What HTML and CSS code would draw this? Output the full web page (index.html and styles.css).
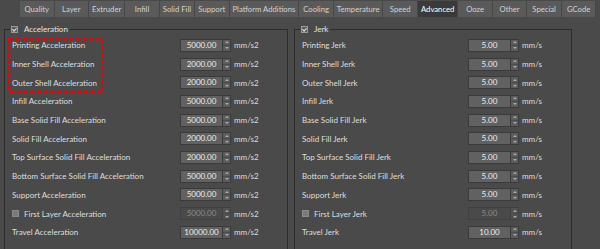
FILE: index.html
```html
<!DOCTYPE html>
<html lang="en">
<head>
  <meta charset="UTF-8">
  <meta name="viewport" content="width=device-width, initial-scale=1.0">
  <title>Advanced Settings</title>
  <link rel="stylesheet" href="styles.css">
</head>
<body>
  <div class="tabbar">
    <div class="tab">Quality</div>
    <div class="tab">Layer</div>
    <div class="tab">Extruder</div>
    <div class="tab">Infill</div>
    <div class="tab">Solid Fill</div>
    <div class="tab">Support</div>
    <div class="tab">Platform Additions</div>
    <div class="tab">Cooling</div>
    <div class="tab">Temperature</div>
    <div class="tab">Speed</div>
    <div class="tab active">Advanced</div>
    <div class="tab">Ooze</div>
    <div class="tab">Other</div>
    <div class="tab">Special</div>
    <div class="tab">GCode</div>
  </div>

  <div class="panels">
    <fieldset class="group group-accel">
      <legend><span class="check checked"></span>Acceleration</legend>
      <div class="row"><span class="label">Printing Acceleration</span><span class="spin"><span class="value">5000.00</span><span class="arrows"><span class="up"></span><span class="down"></span></span></span><span class="unit">mm/s2</span></div>
      <div class="row"><span class="label">Inner Shell Acceleration</span><span class="spin"><span class="value">2000.00</span><span class="arrows"><span class="up"></span><span class="down"></span></span></span><span class="unit">mm/s2</span></div>
      <div class="row"><span class="label">Outer Shell Acceleration</span><span class="spin"><span class="value">2000.00</span><span class="arrows"><span class="up"></span><span class="down"></span></span></span><span class="unit">mm/s2</span></div>
      <div class="row"><span class="label">Infill Acceleration</span><span class="spin"><span class="value">5000.00</span><span class="arrows"><span class="up"></span><span class="down"></span></span></span><span class="unit">mm/s2</span></div>
      <div class="row"><span class="label">Base Solid Fill Acceleration</span><span class="spin"><span class="value">5000.00</span><span class="arrows"><span class="up"></span><span class="down"></span></span></span><span class="unit">mm/s2</span></div>
      <div class="row"><span class="label">Solid Fill Acceleration</span><span class="spin"><span class="value">2000.00</span><span class="arrows"><span class="up"></span><span class="down"></span></span></span><span class="unit">mm/s2</span></div>
      <div class="row"><span class="label">Top Surface Solid Fill Acceleration</span><span class="spin"><span class="value">2000.00</span><span class="arrows"><span class="up"></span><span class="down"></span></span></span><span class="unit">mm/s2</span></div>
      <div class="row"><span class="label">Bottom Surface Solid Fill Acceleration</span><span class="spin"><span class="value">5000.00</span><span class="arrows"><span class="up"></span><span class="down"></span></span></span><span class="unit">mm/s2</span></div>
      <div class="row"><span class="label">Support Acceleration</span><span class="spin"><span class="value">5000.00</span><span class="arrows"><span class="up"></span><span class="down"></span></span></span><span class="unit">mm/s2</span></div>
      <div class="row"><span class="label"><span class="check"></span>First Layer Acceleration</span><span class="spin disabled"><span class="value">5000.00</span><span class="arrows"><span class="up"></span><span class="down"></span></span></span><span class="unit">mm/s2</span></div>
      <div class="row"><span class="label">Travel Acceleration</span><span class="spin"><span class="value">10000.00</span><span class="arrows"><span class="up"></span><span class="down"></span></span></span><span class="unit">mm/s2</span></div>

      <!-- annotation frame around the first three settings -->
      <svg class="highlight" width="96" height="55" viewBox="0 0 96 55">
        <rect x="1.2" y="1.2" width="93.6" height="52.6" fill="none" stroke="#cc0f14" stroke-width="2.4" stroke-dasharray="4.5 2.2"/>
      </svg>
    </fieldset>

    <fieldset class="group group-jerk">
      <legend><span class="check checked"></span>Jerk</legend>
      <div class="row"><span class="label">Printing Jerk</span><span class="spin"><span class="value">5.00</span><span class="arrows"><span class="up"></span><span class="down"></span></span></span><span class="unit">mm/s</span></div>
      <div class="row"><span class="label">Inner Shell Jerk</span><span class="spin"><span class="value">5.00</span><span class="arrows"><span class="up"></span><span class="down"></span></span></span><span class="unit">mm/s</span></div>
      <div class="row"><span class="label">Outer Shell Jerk</span><span class="spin"><span class="value">5.00</span><span class="arrows"><span class="up"></span><span class="down"></span></span></span><span class="unit">mm/s</span></div>
      <div class="row"><span class="label">Infill Jerk</span><span class="spin"><span class="value">5.00</span><span class="arrows"><span class="up"></span><span class="down"></span></span></span><span class="unit">mm/s</span></div>
      <div class="row"><span class="label">Base Solid Fill Jerk</span><span class="spin"><span class="value">5.00</span><span class="arrows"><span class="up"></span><span class="down"></span></span></span><span class="unit">mm/s</span></div>
      <div class="row"><span class="label">Solid Fill Jerk</span><span class="spin"><span class="value">5.00</span><span class="arrows"><span class="up"></span><span class="down"></span></span></span><span class="unit">mm/s</span></div>
      <div class="row"><span class="label">Top Surface Solid Fill Jerk</span><span class="spin"><span class="value">5.00</span><span class="arrows"><span class="up"></span><span class="down"></span></span></span><span class="unit">mm/s</span></div>
      <div class="row"><span class="label">Bottom Surface Solid Fill Jerk</span><span class="spin"><span class="value">5.00</span><span class="arrows"><span class="up"></span><span class="down"></span></span></span><span class="unit">mm/s</span></div>
      <div class="row"><span class="label">Support Jerk</span><span class="spin"><span class="value">5.00</span><span class="arrows"><span class="up"></span><span class="down"></span></span></span><span class="unit">mm/s</span></div>
      <div class="row"><span class="label"><span class="check"></span>First Layer Jerk</span><span class="spin disabled"><span class="value">5.00</span><span class="arrows"><span class="up"></span><span class="down"></span></span></span><span class="unit">mm/s</span></div>
      <div class="row"><span class="label">Travel Jerk</span><span class="spin"><span class="value">10.00</span><span class="arrows"><span class="up"></span><span class="down"></span></span></span><span class="unit">mm/s</span></div>
    </fieldset>
  </div>
</body>
</html>
```

FILE: styles.css
```css
body {
  margin: 0;
  height: 249px;
  overflow: hidden;
  background-color: #4a4a4a;
  color: #dedede;
  font-family: Lato, "Liberation Sans", sans-serif;
  font-size: 8px;
}
.tabbar {
  display: flex;
  height: 19px;
  padding: 1px 0 0 20px;
  box-sizing: border-box;
}
.tab {
  height: 16px;
  line-height: 16px;
  min-width: 34.5px;
  padding: 0 3px;
  box-sizing: border-box;
  text-align: center;
  white-space: nowrap;
  font-size: 7.7px;
  background-color: #5a5a5a;
  color: #d2d2d2;
  border-right: 1px solid #464646;
}
.tab.active {
  background-color: #3a3a3a;
  color: #ffffff;
}
.panels {
  display: flex;
  gap: 6px;
  padding: 5px 0 0 4px;
}
.group {
  position: relative;
  margin: 0;
  padding: 2px 0 0 5px;
  height: 225px;
  box-sizing: border-box;
  border: 1px solid #2c2c2c;
  border-bottom: none;
}
.group-accel {
  width: 284px;
}
.group-jerk {
  width: 278px;
}
.group legend {
  display: flex;
  align-items: center;
  padding: 0 2px 0 1px;
  height: 10px;
  color: #e4e4e4;
}
.check {
  display: inline-block;
  width: 5px;
  height: 5px;
  margin-right: 6px;
  background-color: #7a7a7a;
  border: 1px solid #8a8a8a;
  position: relative;
}
.check.checked {
  background-color: #5a5a5a;
  border-color: #9a9a9a;
}
.check.checked::after {
  content: "";
  position: absolute;
  left: 1px;
  top: 0;
  width: 1.5px;
  height: 3px;
  border: solid #e8e8e8;
  border-width: 0 1px 1px 0;
  transform: rotate(45deg);
}
.row {
  display: flex;
  align-items: center;
  height: 18.7px;
}
.label {
  display: flex;
  align-items: center;
  padding-left: 2px;
  box-sizing: border-box;
  white-space: nowrap;
}
.group-accel .label {
  width: 170px;
}
.group-jerk .label {
  width: 168px;
}
.label .check {
  margin-right: 5px;
}
.spin {
  display: flex;
  height: 13px;
}
.spin .value {
  width: 42px;
  box-sizing: border-box;
  text-align: center;
  line-height: 11px;
  background-color: #616161;
  border: 1px solid #3a3a3a;
  border-right: none;
  color: #ececec;
}
.arrows {
  display: flex;
  flex-direction: column;
  width: 9px;
  box-sizing: border-box;
  border: 1px solid #3a3a3a;
  background-color: #5c5c5c;
}
.arrows span {
  flex: 1;
  position: relative;
}
.arrows .up {
  border-bottom: 1px solid #4a4a4a;
}
.arrows .up::after,
.arrows .down::after {
  content: "";
  position: absolute;
  left: 1.5px;
  border-left: 2.5px solid transparent;
  border-right: 2.5px solid transparent;
}
.arrows .up::after {
  top: 1.5px;
  border-bottom: 2.5px solid #a8a8a8;
}
.arrows .down::after {
  top: 1.5px;
  border-top: 2.5px solid #a8a8a8;
}
.spin.disabled .value {
  background-color: #4a4a4a;
  color: #8a8a8a;
  border-color: #404040;
}
.spin.disabled .arrows {
  background-color: #525252;
  border-color: #404040;
}
.unit {
  margin-left: 3px;
}
.highlight {
  position: absolute;
  left: 3px;
  top: 4px;
}
```
